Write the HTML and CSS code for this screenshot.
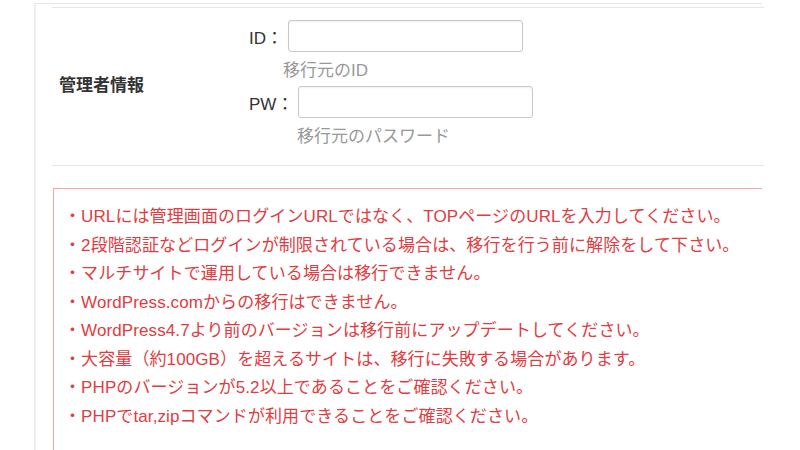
FILE: index.html
```html
<!DOCTYPE html>
<html lang="ja">
<head>
    <meta charset="UTF-8">
    <meta name="viewport" content="width=device-width, initial-scale=1.0">
    <title>移行設定</title>
    <link rel="stylesheet" href="styles.css">
</head>
<body>
    <div class="panel">
        <table class="form-table">
            <tr>
                <th>管理者情報</th>
                <td>
                    <div class="field">
                        <label for="admin_id">ID：</label>
                        <input type="text" id="admin_id" name="admin_id">
                    </div>
                    <p class="hint hint-id">移行元のID</p>
                    <div class="field">
                        <label for="admin_pw">PW：</label>
                        <input type="password" id="admin_pw" name="admin_pw">
                    </div>
                    <p class="hint hint-pw">移行元のパスワード</p>
                </td>
            </tr>
        </table>

        <ul class="notice">
            <li>・URLには管理画面のログインURLではなく、TOPページのURLを入力してください。</li>
            <li>・2段階認証などログインが制限されている場合は、移行を行う前に解除をして下さい。</li>
            <li>・マルチサイトで運用している場合は移行できません。</li>
            <li>・WordPress.comからの移行はできません。</li>
            <li>・WordPress4.7より前のバージョンは移行前にアップデートしてください。</li>
            <li>・大容量（約100GB）を超えるサイトは、移行に失敗する場合があります。</li>
            <li>・PHPのバージョンが5.2以上であることをご確認ください。</li>
            <li>・PHPでtar,zipコマンドが利用できることをご確認ください。</li>
        </ul>
    </div>
</body>
</html>
```

FILE: styles.css
```css
body { margin: 0; background: #fff; color: #333; font-family: "Liberation Sans", Arial, "Noto Sans CJK JP", sans-serif; font-size: 17px; overflow: hidden; }
.panel { margin: 3px 0 0 34px; width: 728px; padding: 3px 0 0 16px; border-top: 1px solid #e6e6e6; border-left: 2px solid #eeeeee; box-sizing: border-box; }
.form-table { width: 712px; border-collapse: collapse; }
.form-table tr { border-top: 1px solid #e6e6e6; border-bottom: 1px solid #e6e6e6; }
.form-table th { width: 190px; padding: 0 0 6px 7px; text-align: left; vertical-align: middle; font-weight: bold; box-sizing: border-box; }
.form-table td { padding: 12px 0 13px 7px; }
.field { display: flex; align-items: center; height: 32px; }
.field input { width: 235px; height: 32px; margin-left: 5px; padding: 4px 8px; border: 1px solid #c8c8c8; border-radius: 3px; box-shadow: inset 0 1px 2px rgba(0,0,0,0.06); box-sizing: border-box; }
.hint { margin: 0; height: 34px; padding-top: 3px; line-height: 31px; color: #999; box-sizing: border-box; }
.hint-id { padding-left: 34px; }
.hint-pw { padding-left: 48px; }
.notice { margin: 22px 0 0 1px; padding: 14px 0 30px 10px; list-style: none; border: 1px solid #f4a6a9; border-right: none; color: #e23b41; line-height: 28.5px; letter-spacing: 0.1px; }
```
